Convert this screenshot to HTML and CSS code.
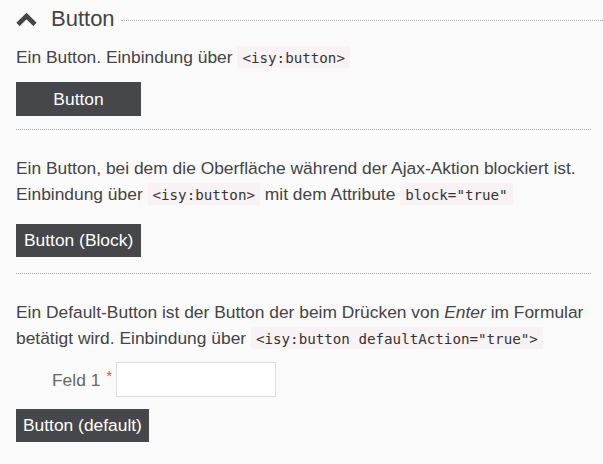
FILE: index.html
```html
<!DOCTYPE html>
<html lang="de">
<head>
<meta charset="utf-8">
<title>Button</title>
<link rel="stylesheet" href="styles.css">
</head>
<body>
<div class="page">
  <header class="panel-head">
    <svg class="chevron" width="21" height="14" viewBox="0 0 21 14" aria-hidden="true">
      <polyline points="2,12.5 10.5,4 19,12.5" fill="none" stroke="#444" stroke-width="4.6" stroke-linejoin="miter"/>
    </svg>
    <h2 class="panel-title">Button</h2>
    <span class="head-rule"></span>
  </header>

  <section class="example first">
    <p class="desc">Ein Button. Einbindung über <code>&lt;isy:button&gt;</code></p>
    <button class="btn btn-wide" type="button">Button</button>
  </section>

  <hr class="sep">

  <section class="example">
    <p class="desc">Ein Button, bei dem die Oberfläche während der Ajax-Aktion blockiert ist. Einbindung über <code>&lt;isy:button&gt;</code> mit dem Attribute <code>block="true"</code></p>
    <button class="btn" type="button">Button (Block)</button>
  </section>

  <hr class="sep">

  <section class="example">
    <p class="desc">Ein Default-Button ist der Button der beim Drücken von <em>Enter</em> im Formular betätigt wird. Einbindung über <code>&lt;isy:button defaultAction="true"&gt;</code></p>
    <div class="field">
      <label class="field-label" for="feld1">Feld 1</label>
      <span class="required">*</span>
      <input class="field-input" id="feld1" type="text">
    </div>
    <button class="btn btn-default" type="button">Button (default)</button>
  </section>
</div>
</body>
</html>
```

FILE: styles.css
```css
html, body {
  margin: 0;
  padding: 0;
  background: #fafafa;
}

body {
  font-family: "Liberation Sans", Arial, sans-serif;
  font-size: 17.4px;
  line-height: 26px;
  color: #444;
}

.page {
  padding: 3px 12px 40px 16px;
}

.panel-head {
  display: flex;
  align-items: center;
  height: 32px;
  margin-right: -12px;
}

.chevron {
  display: block;
  flex: none;
}

.panel-title {
  margin: 0 0 0 14px;
  font-size: 22px;
  font-weight: normal;
  line-height: 32px;
  color: #444;
}

.head-rule {
  flex: 1;
  align-self: flex-start;
  height: 17px;
  margin-left: 6px;
  border-bottom: 1px dotted #a8a8a8;
}

.desc {
  margin: 0;
}

.example {
  display: flex;
  flex-direction: column;
  align-items: flex-start;
  padding-top: 25px;
}

.example.first {
  padding-top: 9px;
}

code {
  font-family: "DejaVu Sans Mono", monospace;
  font-size: 14.2px;
  line-height: 1;
  color: #333;
  background: #f9f2f4;
  padding: 4px 5px 2px;
}

em {
  font-style: italic;
}

.btn {
  margin-top: 17px;
  height: 33px;
  padding: 0 8px;
  border: 0;
  border-radius: 0;
  background: #45474b;
  color: #fff;
  font-family: "Liberation Sans", Arial, sans-serif;
  font-size: 17.4px;
  line-height: 33px;
}

.btn-wide {
  margin-top: 12px;
  height: 34px;
  width: 125px;
}

.btn-default {
  margin-top: 12px;
  padding: 0 7px;
}

.sep {
  margin: 13px 0 0;
  border: 0;
  border-top: 1px dotted #a8a8a8;
  height: 0;
}

.example + .sep {
  margin-top: 16px;
}

.example.first + .sep {
  margin-top: 13px;
}

.field {
  display: flex;
  align-items: center;
  margin-top: 11px;
}

.field-label {
  margin-left: 36px;
  color: #666;
}

.required {
  align-self: flex-start;
  margin: 6px 4px 0 6px;
  font-size: 15px;
  line-height: 15px;
  color: #d9534f;
}

.field-input {
  box-sizing: border-box;
  width: 160px;
  height: 35px;
  margin: 0;
  border: 1px solid #dcdcdc;
  background: #fff;
  font-family: "Liberation Sans", Arial, sans-serif;
  font-size: 17px;
  padding: 0 6px;
}
```
